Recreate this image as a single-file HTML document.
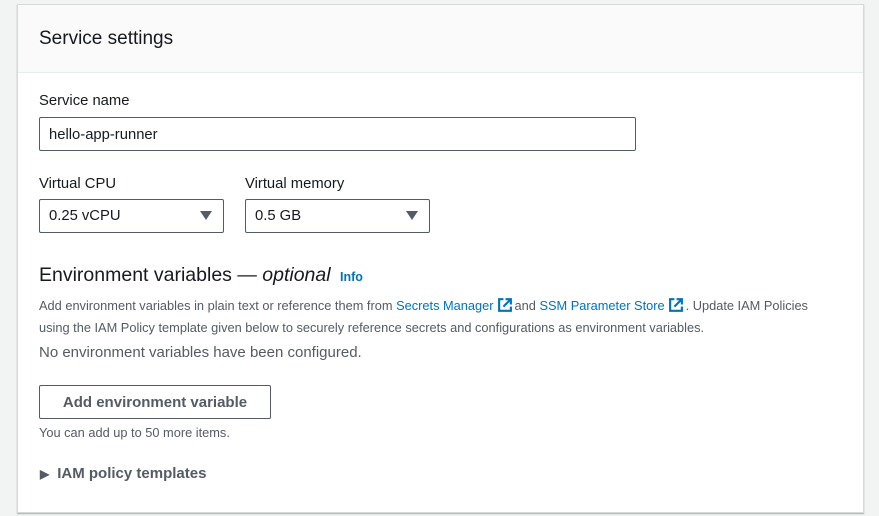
<!DOCTYPE html><html><head><style>
body{margin:0;background:#f2f3f3;font-family:"Liberation Sans",sans-serif;color:#16191f;width:879px;height:516px;overflow:hidden;position:relative}
.card{position:absolute;left:17px;top:4px;width:845px;height:507px;background:#fff;border:1px solid #d5dbdb;box-shadow:0 1px 1px rgba(0,28,36,.3)}
.hd{height:67px;background:#fafafa;border-bottom:1px solid #eaeded}
.a{position:absolute;white-space:nowrap}
.box{position:absolute;border:1px solid #545b64;border-radius:2px;box-sizing:border-box;font-size:14.8px;padding-left:9px;line-height:34px}
.tri{position:absolute;right:11px;top:11px;width:0;height:0;border-left:6px solid transparent;border-right:6px solid transparent;border-top:9px solid #545b64}
.lk{color:#0073bb}
.ext{display:inline-block;vertical-align:-3px;margin:0 2px 0 3px}
.sm{font-size:12.8px;color:#545b64}
</style></head><body>
<div class="card"><div class="hd"></div></div>
<div class="a" style="left:39px;top:28px;font-size:19px">Service settings</div>
<div class="a" style="left:39px;top:93px;font-size:14.8px">Service name</div>
<div class="box" style="left:39px;top:117px;width:597px;height:34px">hello-app-runner</div>
<div class="a" style="left:39px;top:176px;font-size:14.8px">Virtual CPU</div>
<div class="a" style="left:245px;top:176px;font-size:14.8px">Virtual memory</div>
<div class="box" style="left:39px;top:199px;width:185px;height:34px;line-height:32px">0.25 vCPU<span class="tri"></span></div>
<div class="box" style="left:245px;top:199px;width:185px;height:34px;line-height:32px">0.5 GB<span class="tri"></span></div>
<div class="a" style="left:39px;top:264px;font-size:19.5px">Environment variables — <i>optional</i> <b class="lk" style="font-size:12.5px;margin-left:4px">Info</b></div>
<div class="a sm" style="left:39px;top:297px">Add environment variables in plain text or reference them from <span class="lk">Secrets Manager</span><svg class="ext" width="16" height="16" viewBox="0 0 15 15"><path d="M6 2H2v11h11V9" fill="none" stroke="#0073bb" stroke-width="2"/><path d="M6 9l7-7M8 2h5v5" fill="none" stroke="#0073bb" stroke-width="2"/></svg>and <span class="lk">SSM Parameter Store</span><svg class="ext" width="16" height="16" viewBox="0 0 15 15"><path d="M6 2H2v11h11V9" fill="none" stroke="#0073bb" stroke-width="2"/><path d="M6 9l7-7M8 2h5v5" fill="none" stroke="#0073bb" stroke-width="2"/></svg>. Update IAM Policies</div>
<div class="a sm" style="left:39px;top:320px">using the IAM Policy template given below to securely reference secrets and configurations as environment variables.</div>
<div class="a" style="left:39px;top:344px;font-size:15px;color:#545b64">No environment variables have been configured.</div>
<div class="box" style="left:39px;top:385px;width:232px;height:34px;text-align:center;padding:0;font-weight:bold;color:#545b64;font-size:15px;line-height:33px">Add environment variable</div>
<div class="a sm" style="left:39px;top:425px">You can add up to 50 more items.</div>
<div class="a" style="left:40px;top:465px;font-size:15px;font-weight:bold;color:#545b64"><span style="font-size:12px;margin-right:8px">▶</span>IAM policy templates</div>
</body></html>
